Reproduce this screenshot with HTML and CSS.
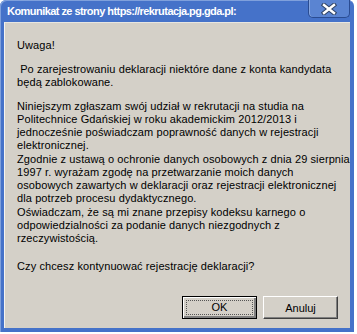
FILE: index.html
```html
<!DOCTYPE html>
<html lang="pl">
<head>
    <meta charset="UTF-8" />
    <title>Komunikat</title>
    <link rel="stylesheet" href="styles.css">
</head>
<body>
<div class="window">
  <div class="titlebar">
    <span class="title">Komunikat ze strony https://rekrutacja.pg.gda.pl:</span>
    <span class="close">
      <svg width="16" height="12" viewBox="0 0 16 12">
        <path d="M3 2 L13 10 M13 2 L3 10" stroke="#2f4366" stroke-width="4.5" stroke-linecap="square"/>
        <path d="M3 2 L13 10 M13 2 L3 10" stroke="#ffffff" stroke-width="2.4" stroke-linecap="square"/>
      </svg>
    </span>
  </div>
  <div class="content">
    <div class="message">
      <p class="first">Uwaga!</p>
      <p>&nbsp;Po zarejestrowaniu deklaracji niektóre dane z konta kandydata<br>będą zablokowane.</p>
      <p>Niniejszym zgłaszam swój udział w rekrutacji na studia na<br>Politechnice Gdańskiej w roku akademickim 2012/2013 i<br>jednocześnie poświadczam poprawność danych w rejestracji<br>elektronicznej.</p>
      <p class="tight">Zgodnie z ustawą o ochronie danych osobowych z dnia 29 sierpnia<br>1997 r. wyrażam zgodę na przetwarzanie moich danych<br>osobowych zawartych w deklaracji oraz rejestracji elektronicznej<br>dla potrzeb procesu dydaktycznego.</p>
      <p class="tight">Oświadczam, że są mi znane przepisy kodeksu karnego o<br>odpowiedzialności za podanie danych niezgodnych z<br>rzeczywistością.</p>
      <p class="question">Czy chcesz kontynuować rejestrację deklaracji?</p>
    </div>
    <div class="buttons">
      <button class="default"><span class="focus">OK</span></button>
      <button>Anuluj</button>
    </div>
  </div>
</div>
</body>
</html>
```

FILE: styles.css
```css
body {
    margin: 0;
    background-color: #ffffff;
    font-family: "Liberation Sans", sans-serif;
}
.window {
    width: 354px;
    height: 332px;
    box-sizing: border-box;
    padding: 0 4px 4px 4px;
    background-color: #4572c9;
    border-radius: 6px 6px 0 0;
    box-shadow: inset 1px 1px 0 #7fa0dc;
    display: flex;
    flex-direction: column;
}
.titlebar {
    height: 22px;
    display: flex;
    align-items: flex-start;
    justify-content: space-between;
}
.title {
    margin: 5px 0 0 3px;
    color: #ffffff;
    font-weight: bold;
    font-size: 11px;
    letter-spacing: -0.55px;
    white-space: nowrap;
}
.close {
    width: 42px;
    height: 18px;
    box-sizing: border-box;
    border: 1px solid #2a4c92;
    border-top: none;
    border-radius: 0 0 5px 5px;
    background-color: #5a84d2;
    box-shadow: inset 1px 0 0 #86a6e0;
    display: flex;
    align-items: center;
    justify-content: center;
}
.content {
    flex: 1;
    background-color: #d4d0c8;
    border-top: 1px solid #e8e6e0;
    border-left: 1px solid #f4f3ef;
    display: flex;
    flex-direction: column;
    justify-content: space-between;
}
.message {
    padding: 16px 0 0 12px;
    font-size: 11px;
    line-height: 13px;
    letter-spacing: 0.1px;
    white-space: nowrap;
    color: #000000;
}
.message p {
    margin: 11px 0 0 0;
}
.message p.first {
    margin-top: 0;
}
.message p.tight {
    margin-top: 1px;
}
.message p.question {
    margin-top: 15px;
}
.buttons {
    display: flex;
    justify-content: flex-end;
    gap: 6px;
    padding: 0 12px 9px 0;
}
button {
    width: 75px;
    height: 23px;
    padding: 0;
    font-family: "Liberation Sans", sans-serif;
    font-size: 11px;
    color: #000000;
    background-color: #d4d0c8;
    border: 1px solid;
    border-color: #ffffff #404040 #404040 #ffffff;
    box-shadow: inset -1px -1px 0 #808080;
}
button.default {
    border: 1px solid #000000;
    box-shadow: inset 1px 1px 0 #ffffff, inset -2px -2px 0 #808080;
    padding: 3px;
}
.focus {
    display: block;
    height: 100%;
    box-sizing: border-box;
    border: 1px dotted #555555;
    line-height: 13px;
}
```
